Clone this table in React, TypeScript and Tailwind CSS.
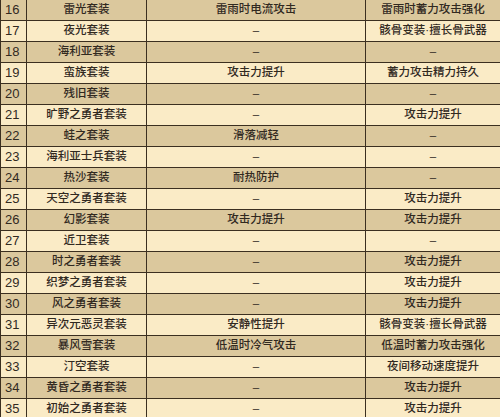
const rows: [number, string, string, string][] = [
  [16, "雷光套装", "雷雨时电流攻击", "雷雨时蓄力攻击强化"],
  [17, "夜光套装", "–", "骸骨变装·擅长骨武器"],
  [18, "海利亚套装", "–", "–"],
  [19, "蛮族套装", "攻击力提升", "蓄力攻击精力持久"],
  [20, "残旧套装", "–", "–"],
  [21, "旷野之勇者套装", "–", "攻击力提升"],
  [22, "蛙之套装", "滑落减轻", "–"],
  [23, "海利亚士兵套装", "–", "–"],
  [24, "热沙套装", "耐热防护", "–"],
  [25, "天空之勇者套装", "–", "攻击力提升"],
  [26, "幻影套装", "攻击力提升", "攻击力提升"],
  [27, "近卫套装", "–", "–"],
  [28, "时之勇者套装", "–", "攻击力提升"],
  [29, "织梦之勇者套装", "–", "攻击力提升"],
  [30, "风之勇者套装", "–", "攻击力提升"],
  [31, "异次元恶灵套装", "安静性提升", "骸骨变装·擅长骨武器"],
  [32, "暴风雪套装", "低温时冷气攻击", "低温时蓄力攻击强化"],
  [33, "汀空套装", "–", "夜间移动速度提升"],
  [34, "黄昏之勇者套装", "–", "攻击力提升"],
  [35, "初始之勇者套装", "–", "攻击力提升"],
]

export default function App() {
  return (
    <div className="w-[500px] h-[417px] overflow-hidden bg-[#faebc6] text-[#31291f] text-[11.5px] font-medium font-['Liberation_Sans','Noto_Sans_CJK_SC',sans-serif]">
      <div className="flex flex-col border-l border-[#3b2f20]">
        {rows.map(([n, name, a, b]) => (
          <div
            key={n}
            className={`flex h-[21px] border-b border-[#3b2f20] ${n % 2 === 0 ? "bg-[#dbc89d]" : "bg-[#faebc6]"}`}
          >
            <div className="w-[26px] shrink-0 border-r border-[#3b2f20] flex items-center pl-[4px] text-[13px] font-normal">
              {n}
            </div>
            <div className="w-[120px] shrink-0 border-r border-[#3b2f20] flex items-center justify-center">
              {name}
            </div>
            <div className="w-[219px] shrink-0 border-r border-[#3b2f20] flex items-center justify-center">
              {a}
            </div>
            <div className="flex-1 flex items-center justify-center">{b}</div>
          </div>
        ))}
      </div>
    </div>
  )
}
